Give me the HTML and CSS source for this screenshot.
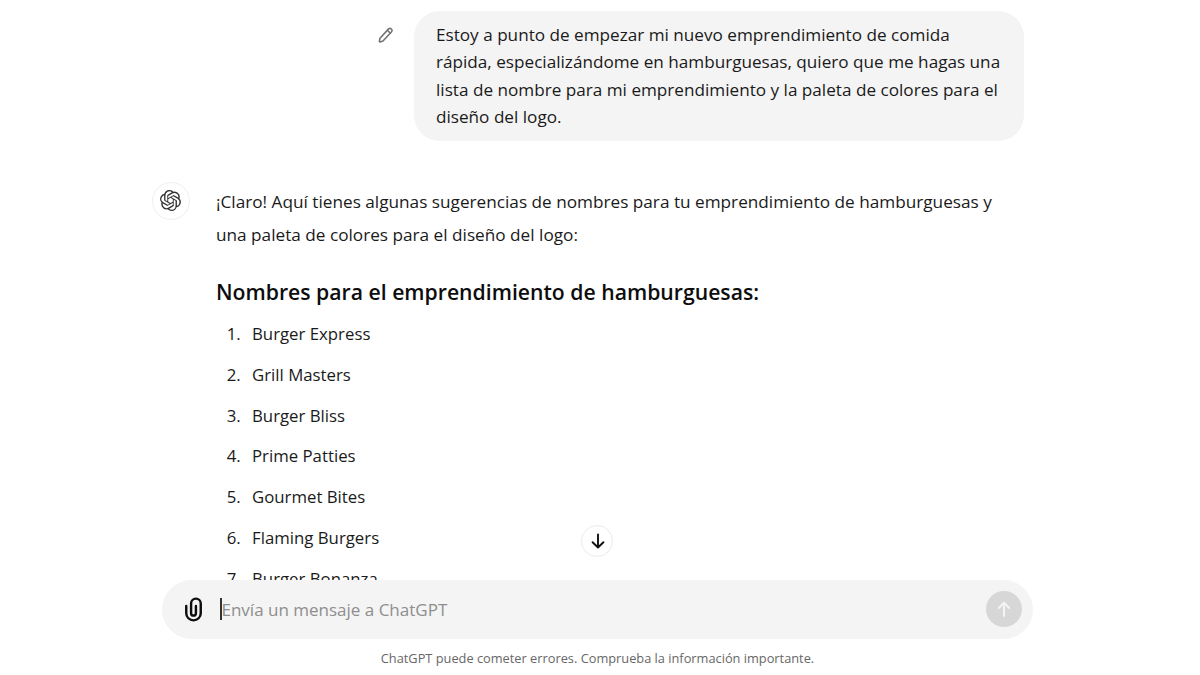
FILE: index.html
```html
<!DOCTYPE html>
<html lang="es">
<head>
<meta charset="utf-8">
<title>ChatGPT</title>
<link rel="stylesheet" href="styles.css">
</head>
<body>
<div class="page">
  <main class="thread">
    <section class="user-row">
      <svg class="edit-icon" viewBox="0 0 18 18" width="18" height="18" fill="none" stroke="currentColor" stroke-width="1.6" stroke-linejoin="round"><path d="M3 12.2 11.6 2.9a2.1 2.1 0 0 1 3 2.9L6 15l-2.9.9c-.5.1-.8-.2-.7-.7L3 12.2Z"/><path d="M10.4 4.2l3 3"/></svg>
      <div class="bubble">Estoy a punto de empezar mi nuevo emprendimiento de comida rápida, especializándome en hamburguesas, quiero que me hagas una lista de nombre para mi emprendimiento y la paleta de colores para el diseño del logo.</div>
    </section>
    <section class="bot-row">
      <div class="avatar">
        <svg viewBox="0 0 24 24" width="21" height="21" fill="currentColor"><path d="M22.2819 9.8211a5.9847 5.9847 0 0 0-.5157-4.9108 6.0462 6.0462 0 0 0-6.5098-2.9A6.0651 6.0651 0 0 0 4.9807 4.1818a5.9847 5.9847 0 0 0-3.9977 2.9 6.0462 6.0462 0 0 0 .7427 7.0966 5.98 5.98 0 0 0 .511 4.9107 6.051 6.051 0 0 0 6.5146 2.9001A5.9847 5.9847 0 0 0 13.2599 24a6.0557 6.0557 0 0 0 5.7718-4.2058 5.9894 5.9894 0 0 0 3.9977-2.9001 6.0557 6.0557 0 0 0-.7475-7.0729zm-9.022 12.6081a4.4755 4.4755 0 0 1-2.8764-1.0408l.1419-.0804 4.7783-2.7582a.7948.7948 0 0 0 .3927-.6813v-6.7369l2.02 1.1686a.071.071 0 0 1 .038.052v5.5826a4.504 4.504 0 0 1-4.4945 4.4944zm-9.6607-4.1254a4.4708 4.4708 0 0 1-.5346-3.0137l.142.0852 4.783 2.7582a.7712.7712 0 0 0 .7806 0l5.8428-3.3685v2.3324a.0804.0804 0 0 1-.0332.0615L9.74 19.9502a4.4992 4.4992 0 0 1-6.1408-1.6464zM2.3408 7.8956a4.485 4.485 0 0 1 2.3655-1.9728V11.6a.7664.7664 0 0 0 .3879.6765l5.8144 3.3543-2.0201 1.1685a.0757.0757 0 0 1-.071 0l-4.8303-2.7865A4.504 4.504 0 0 1 2.3408 7.872zm16.5963 3.8558L13.1038 8.364 15.1192 7.2a.0757.0757 0 0 1 .071 0l4.8303 2.7913a4.4944 4.4944 0 0 1-.6765 8.1042v-5.6772a.79.79 0 0 0-.407-.667zm2.0107-3.0231l-.142-.0852-4.7735-2.7818a.7759.7759 0 0 0-.7854 0L9.409 9.2297V6.8974a.0662.0662 0 0 1 .0284-.0615l4.8303-2.7866a4.4992 4.4992 0 0 1 6.6802 4.66zM8.3065 12.863l-2.02-1.1638a.0804.0804 0 0 1-.038-.0567V6.0742a4.4992 4.4992 0 0 1 7.3757-3.4537l-.142.0805L8.704 5.459a.7948.7948 0 0 0-.3927.6813zm1.0976-2.3654l2.602-1.4998 2.6069 1.4998v2.9994l-2.5974 1.4997-2.6067-1.4997Z"/></svg>
      </div>
      <div class="answer">
        <p class="intro">¡Claro! Aquí tienes algunas sugerencias de nombres para tu emprendimiento de hamburguesas y una paleta de colores para el diseño del logo:</p>
        <h3 class="heading">Nombres para el emprendimiento de hamburguesas:</h3>
        <ol class="names">
          <li>Burger Express</li>
          <li>Grill Masters</li>
          <li>Burger Bliss</li>
          <li>Prime Patties</li>
          <li>Gourmet Bites</li>
          <li>Flaming Burgers</li>
          <li>Burger Bonanza</li>
        </ol>
      </div>
    </section>
    <button class="scroll-down" type="button" aria-label="Bajar">
      <svg viewBox="0 0 18 18" width="18" height="18" fill="none" stroke="currentColor" stroke-width="1.9" stroke-linecap="round" stroke-linejoin="round"><path d="M9 2.5v13M3.6 10.2 9 15.5l5.4-5.3"/></svg>
    </button>
  </main>
  <div class="composer">
    <svg class="clip" viewBox="0 0 24 24" width="29" height="29" fill="currentColor"><path fill-rule="evenodd" clip-rule="evenodd" d="M9 7a5 5 0 0 1 10 0v8a7 7 0 1 1-14 0V9a1 1 0 0 1 2 0v6a5 5 0 0 0 10 0V7a3 3 0 1 0-6 0v8a1 1 0 1 0 2 0V9a1 1 0 1 1 2 0v6a3 3 0 1 1-6 0V7z"/></svg>
    <span class="caret"></span>
    <span class="placeholder">Envía un mensaje a ChatGPT</span>
    <span class="send">
      <svg viewBox="0 0 18 18" width="18" height="18" fill="none" stroke="currentColor" stroke-width="2" stroke-linecap="round" stroke-linejoin="round"><path d="M9 16V3M3.8 8 9 2.8 14.2 8"/></svg>
    </span>
  </div>
  <footer class="note">ChatGPT puede cometer errores. Comprueba la información importante.</footer>
</div>
</body>
</html>
```

FILE: styles.css
```css
* { box-sizing: border-box; }
html, body { margin: 0; height: 100%; background: #fff; }
body {
  font-family: "Open Sans", "Noto Sans", sans-serif;
  color: #0d0d0d;
  overflow: hidden;
}
.page {
  height: 675px;
  display: flex;
  flex-direction: column;
}
.thread {
  position: relative;
  height: 580px;
  overflow: hidden;
  padding-top: 11px;
  flex: none;
}
.user-row {
  display: flex;
  justify-content: flex-end;
  align-items: flex-start;
  gap: 19px;
  padding-right: 176px;
}
.edit-icon {
  color: #737373;
  margin-top: 15px;
}
.bubble {
  width: 610px;
  height: 130px;
  background: #f4f4f4;
  border-radius: 26px;
  padding: 10px 22px 0 22px;
  font-size: 17.15px;
  line-height: 27.4px;
  color: #1a1a1a;
}
.bot-row {
  display: flex;
  gap: 26px;
  margin-top: 41px;
  padding-left: 152px;
  width: 1012px;
}
.avatar {
  flex: none;
  width: 38px;
  height: 38px;
  border-radius: 50%;
  border: 1px solid #efefef;
  display: flex;
  align-items: center;
  justify-content: center;
  color: #333;
  padding: 0 1px 1px 0;
}
.answer { flex: 1; min-width: 0; }
.intro {
  margin: 0;
  padding-top: 3px;
  font-size: 17.2px;
  line-height: 33px;
  color: #1a1a1a;
}
.heading {
  margin: 24px 0 0;
  font-size: 21.2px;
  line-height: 33px;
  font-weight: 600;
}
.names {
  margin: 12px 0 0;
  padding: 0 0 0 29px;
  font-size: 16.8px;
  line-height: 27px;
  color: #1a1a1a;
}
.names li {
  margin-bottom: 13.8px;
  padding-left: 7px;
}
.scroll-down {
  position: absolute;
  left: 581px;
  top: 525px;
  width: 32px;
  height: 32px;
  padding: 0 0 0 1px;
  border-radius: 50%;
  border: 1px solid #ececec;
  background: #fff;
  color: #111;
  display: flex;
  align-items: center;
  justify-content: center;
}
.composer {
  flex: none;
  margin-left: 162px;
  width: 871px;
  height: 59px;
  border-radius: 30px;
  background: #f4f4f4;
  display: flex;
  align-items: center;
  padding: 0 11px 1px 17px;
}
.clip { color: #0d0d0d; flex: none; }
.caret {
  width: 1.5px;
  height: 22px;
  background: #333;
  margin-left: 12px;
  flex: none;
}
.placeholder {
  flex: 1;
  font-size: 17px;
  color: #8e8e8e;
}
.send {
  flex: none;
  width: 36px;
  height: 36px;
  border-radius: 50%;
  background: #d7d7d7;
  color: #f4f4f4;
  display: flex;
  align-items: center;
  justify-content: center;
}
.note {
  flex: none;
  margin-top: 11px;
  text-align: center;
  font-size: 12.8px;
  line-height: 16px;
  color: #676767;
  padding-right: 5px;
}
```
